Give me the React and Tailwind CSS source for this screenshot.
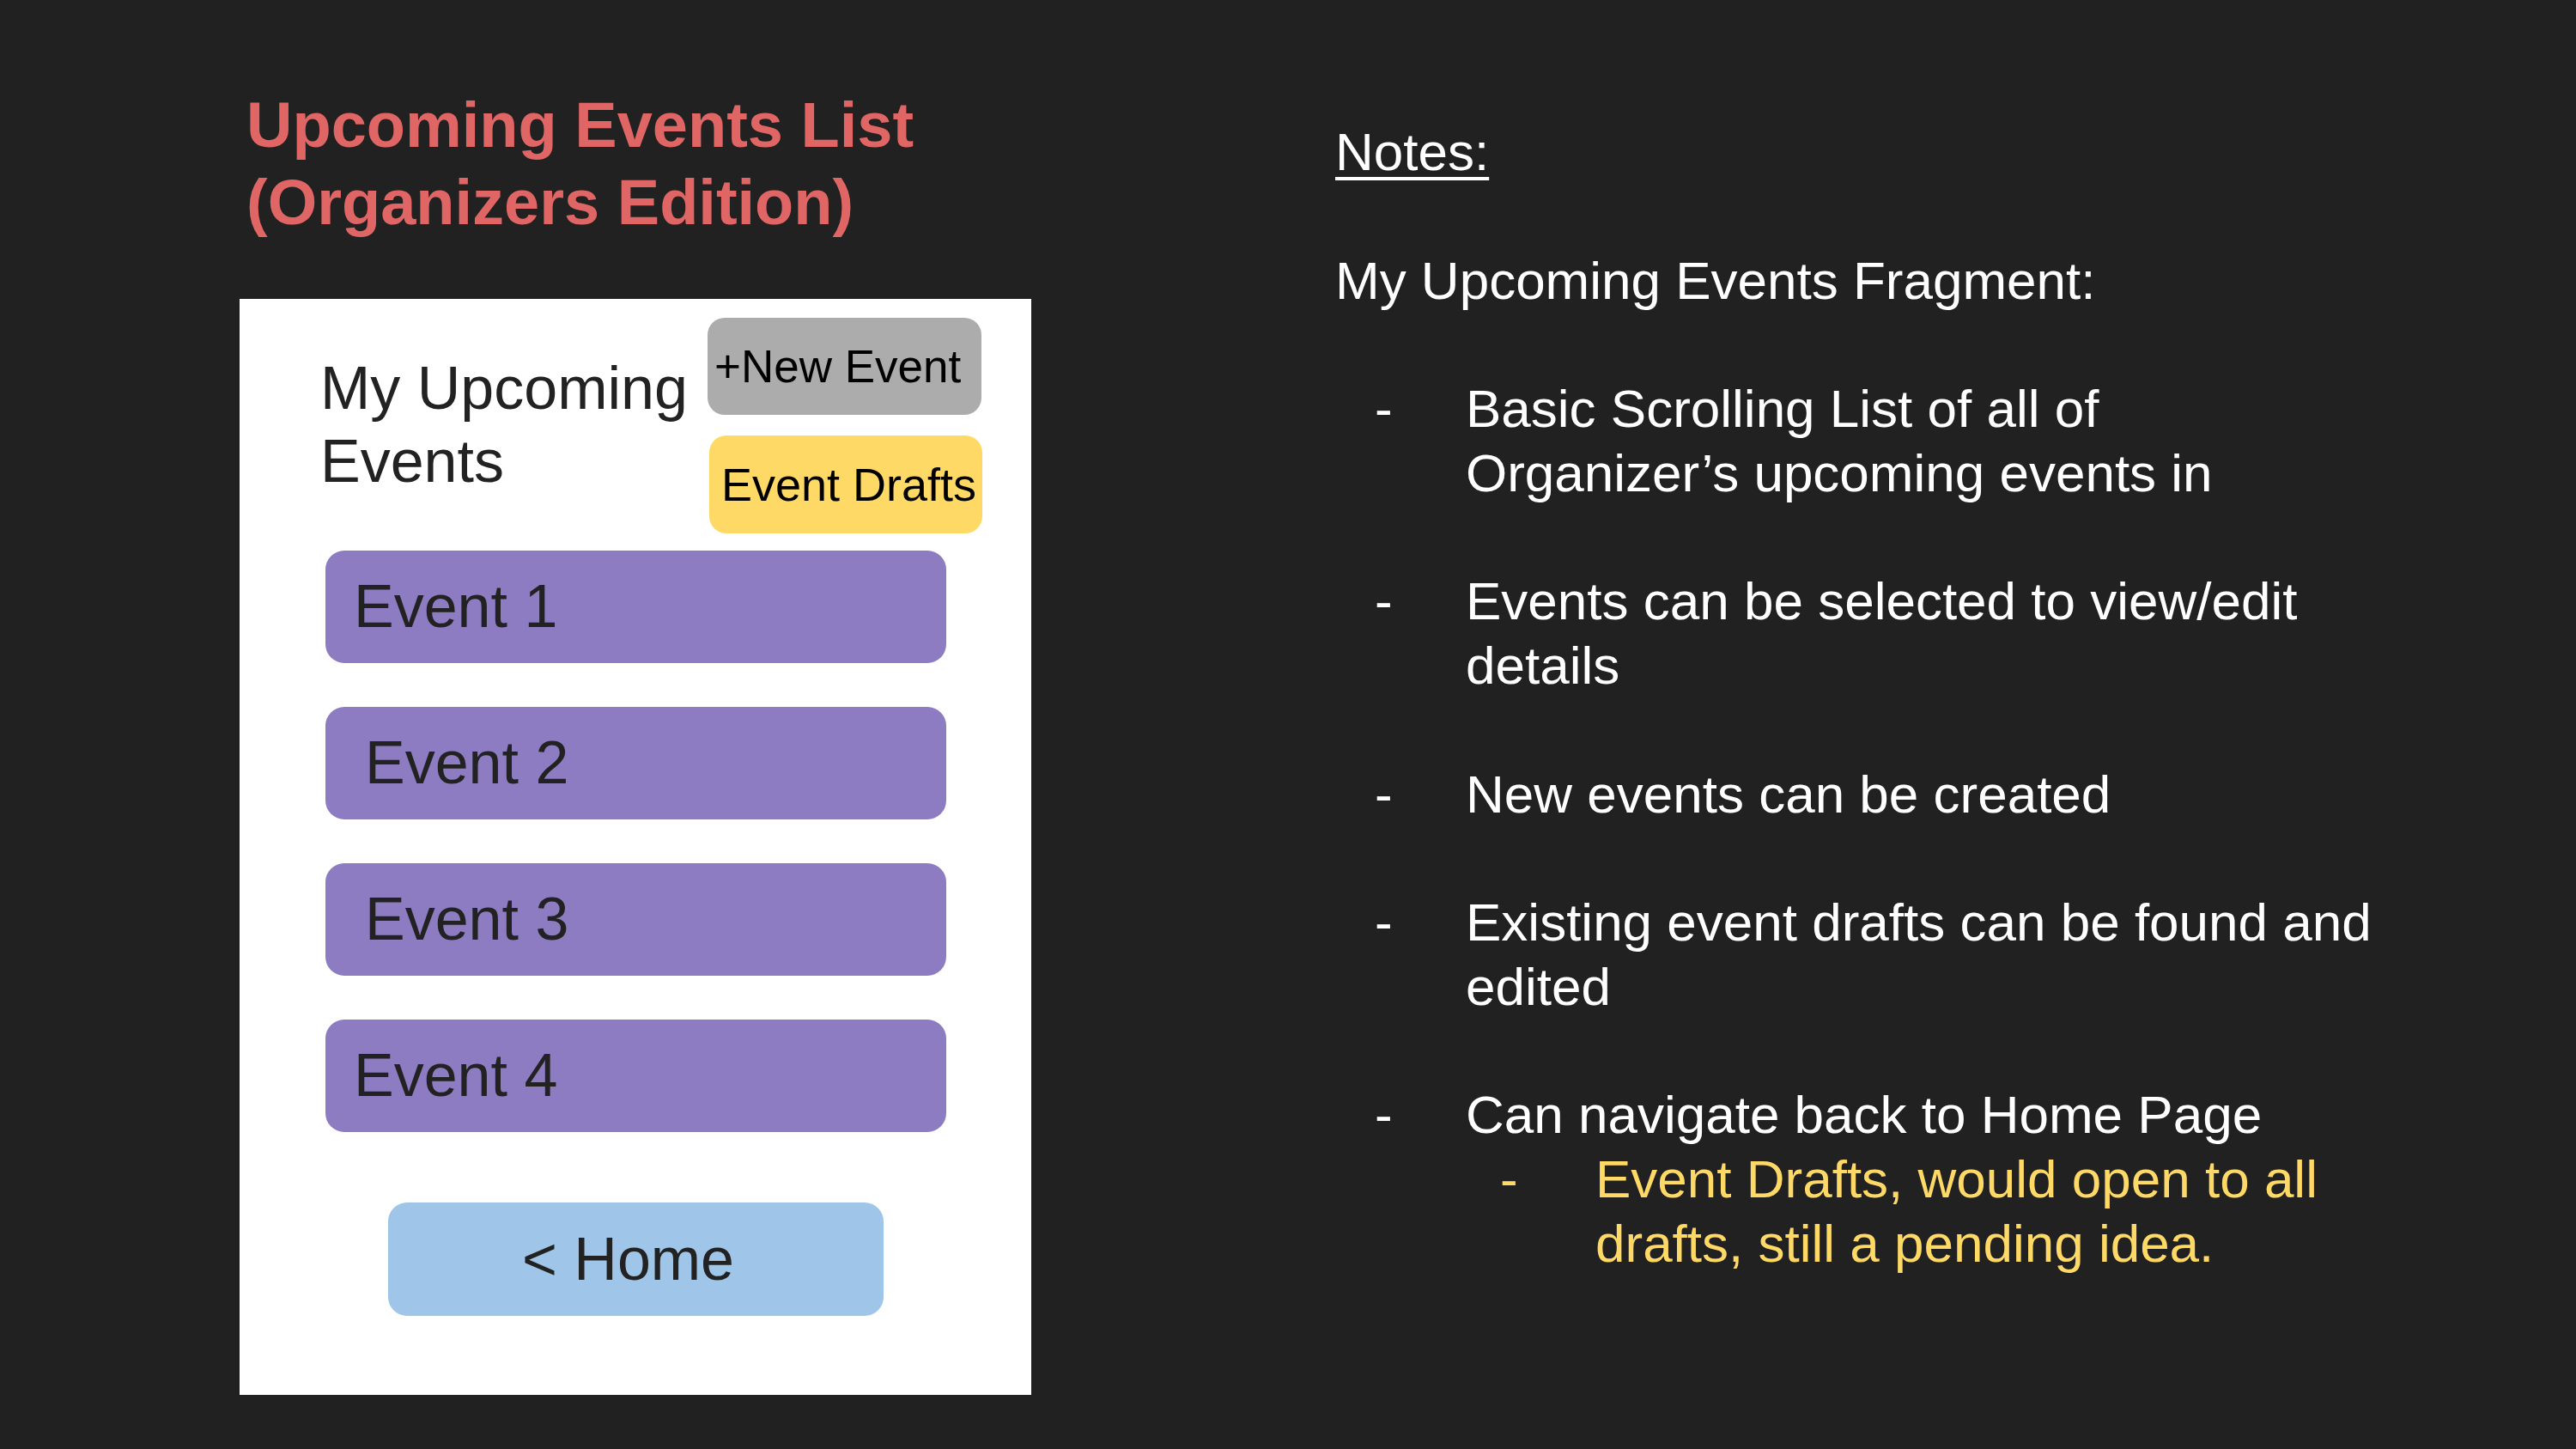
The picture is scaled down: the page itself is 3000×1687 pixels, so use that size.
const events = [
  { label: 'Event 1', pad: 'pl-[33px]' },
  { label: 'Event 2', pad: 'pl-[46px]' },
  { label: 'Event 3', pad: 'pl-[46px]' },
  { label: 'Event 4', pad: 'pl-[33px]' },
];

const Bullet = ({ children }) => (
  <div className="flex mt-[74.75px] pl-[46px]">
    <span className="w-[106px] shrink-0">-</span>
    <div className="whitespace-nowrap">{children}</div>
  </div>
);

const App = () => {
  return (
    <div className="w-[3000px] h-[1687px] bg-[#212121] flex [font-family:'Liberation_Sans',Arial,sans-serif] overflow-hidden">
      {/* left: mockup */}
      <div className="ml-[279px] w-[922px] flex flex-col pt-[101px]">
        <h1 className="ml-[8px] text-[74px] leading-[90px] font-bold text-[#e06666]">
          Upcoming Events List
          <br />
          (Organizers Edition)
        </h1>

        <div className="mt-[67px] h-[1276px] bg-white flex flex-col text-[#222222]">
          <div className="flex">
            <div className="w-[545px] pl-[94px] pt-[62px] text-[70px] leading-[85px] whitespace-nowrap">
              My Upcoming
              <br />
              Events
            </div>
            <div className="flex flex-col gap-[24px] pt-[22px]">
              <div className="w-[319px] h-[113px] rounded-[20px] bg-[#acacac] flex items-center pl-[8px] text-[53px] text-black whitespace-nowrap">
                +New Event
              </div>
              <div className="ml-[2px] w-[318px] h-[114px] rounded-[20px] bg-[#ffd966] flex items-center pl-[14px] text-[54px] text-black whitespace-nowrap">
                Event Drafts
              </div>
            </div>
          </div>

          <div className="mt-[20px] ml-[100px] flex flex-col gap-[51px]">
            {events.map((ev) => (
              <div
                key={ev.label}
                className={`w-[723px] h-[131px] rounded-[22px] bg-[#8e7cc3] flex items-center text-[70px] ${ev.pad}`}
              >
                {ev.label}
              </div>
            ))}
          </div>

          <div className="mt-[82px] ml-[173px] w-[577px] h-[132px] rounded-[22px] bg-[#9fc5e8] flex items-center pl-[156px] text-[70px]">
            &lt; Home
          </div>
        </div>
      </div>

      {/* right: notes */}
      <div className="ml-[354px] pt-[140px] text-white text-[62px] leading-[74.75px]">
        <div className="underline underline-offset-[8px] decoration-[4px]">Notes:</div>
        <div className="mt-[74.75px]">My Upcoming Events Fragment:</div>

        <Bullet>
          Basic Scrolling List of all of
          <br />
          Organizer’s upcoming events in
        </Bullet>
        <Bullet>
          Events can be selected to view/edit
          <br />
          details
        </Bullet>
        <Bullet>New events can be created</Bullet>
        <Bullet>
          Existing event drafts can be found and
          <br />
          edited
        </Bullet>
        <div className="flex mt-[74.75px] pl-[46px]">
          <span className="w-[106px] shrink-0">-</span>
          <div className="whitespace-nowrap">
            Can navigate back to Home Page
            <div className="flex ml-[40px] text-[#ffd966]">
              <span className="w-[111px] shrink-0">-</span>
              <div>
                Event Drafts, would open to all
                <br />
                drafts, still a pending idea.
              </div>
            </div>
          </div>
        </div>
      </div>
    </div>
  );
};

export default App;
